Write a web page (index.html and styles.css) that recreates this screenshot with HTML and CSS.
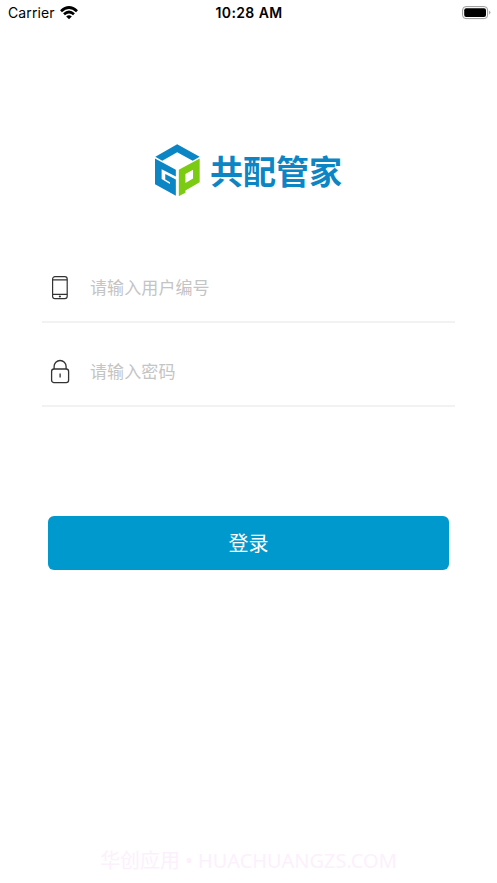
FILE: index.html
```html
<!DOCTYPE html>
<html lang="zh-CN">
<head>
<meta charset="utf-8">
<title>共配管家</title>
<link rel="stylesheet" href="styles.css">
</head>
<body>
<header class="status">
  <div class="carrier"><span>Carrier</span>
    <svg class="wifi" viewBox="0 0 18 14"><path d="M1 5.2Q9-2.2 17 5.2M4 8.2Q9 3.8 14 8.2" fill="none" stroke="#000" stroke-width="2.7"/><path d="M6.2 10.4Q9 8 11.8 10.4L9 13.2Z"/></svg>
  </div>
  <time class="clock">10:28 AM</time>
  <svg class="battery" viewBox="0 0 29 14"><rect x=".6" y=".6" width="25" height="12" rx="3.4" fill="#fff" stroke="#999"/><rect x="2.2" y="2.2" width="21.8" height="8.8" rx="2"/><path d="M27.2 4.6Q29.6 6.6 27.2 8.6Z" fill="#999"/></svg>
</header>
<main class="login">
  <div class="brand">
    <svg class="mark" viewBox="30 27 136 156">
      <path fill="#0c85c5" d="M97 27L165 65L144 77L97 51L52 77L31 65Z"/>
      <path fill="#0c85c5" d="M30 70L93 104V125L50 103V132L75 147V142L61 134V117L93 134V183L30 148Z"/>
      <path fill="#7acb12" fill-rule="evenodd" d="M102 104L165 70V142L122 167V174L102 184ZM122 117V144L145 131V104Z"/>
    </svg>
    <h1 class="name">共配管家</h1>
  </div>
  <form class="form">
    <label class="field">
      <svg class="icon" viewBox="0 0 20 26" fill="none" stroke="#333" stroke-width="1.2"><rect x="2.6" y="1.6" width="14.6" height="22" rx="2.4"/><path d="M2.6 4.8H17.2M2.6 19.4H17.2"/><circle cx="9.9" cy="21.5" r=".5"/></svg>
      <input class="input" type="text" placeholder="请输入用户编号">
    </label>
    <label class="field">
      <svg class="icon" viewBox="0 0 20 26" fill="none" stroke="#333" stroke-width="1.3"><rect x="1.6" y="10" width="17" height="13.6" rx="2.4"/><path d="M4.1 10V7.5A6 6 0 0 1 16.1 7.5V10M10.1 14.5V18.5"/></svg>
      <input class="input" type="password" placeholder="请输入密码">
    </label>
    <button class="submit" type="button">登录</button>
  </form>
</main>
<footer class="footer">华创应用 • HUACHUANGZS.COM</footer>
</body>
</html>
```
FILE: styles.css
```css
* { box-sizing: border-box; }
body {
  margin: 0;
  height: 883px;
  display: flex;
  flex-direction: column;
  overflow: hidden;
  background: #fff;
  color: #000;
  font-family: Inter, "Noto Sans CJK SC", sans-serif;
}
.status {
  height: 26px;
  padding: 0 6px 0 8px;
  display: grid;
  grid-template-columns: 1fr auto 1fr;
  align-items: center;
  font-size: 14px;
  line-height: 16px;
}
.carrier { display: flex; align-items: center; gap: 5px; letter-spacing: .1px; }
.wifi { width: 18px; height: 14px; }
.clock { font-weight: 600; letter-spacing: .4px; margin-left: -1px; }
.battery { width: 29px; height: 14px; justify-self: end; }
.login { flex: 1; }
.brand {
  margin-top: 118px;
  height: 52px;
  padding-left: 155px;
  display: flex;
  align-items: center;
  gap: 10px;
}
.mark { width: 45px; height: 52px; }
.name {
  margin: 0;
  font: 700 33px/52px "Noto Sans CJK SC", sans-serif;
  color: #0c85c5;
  white-space: nowrap;
}
.form { margin: 43px 42px 0; }
.field {
  height: 84px;
  padding: 14px 0 0 8px;
  display: flex;
  align-items: center;
  gap: 20px;
  border-bottom: 2px solid #f2f2f2;
}
.icon { width: 20px; height: 26px; flex: none; margin-top: 2px; }
.input {
  flex: 1;
  min-width: 0;
  height: 30px;
  padding: 0;
  border: 0;
  outline: 0;
  background: none;
  font: 400 17px/30px "Noto Sans CJK SC", sans-serif;
  letter-spacing: .1px;
}
.input::placeholder { color: #c4c4c4; opacity: 1; }
.submit {
  display: block;
  width: 401px;
  height: 54px;
  margin: 109px 0 0 6px;
  padding: 0;
  border: 0;
  border-radius: 6px;
  background: #0099ce;
  color: #fff;
  font: 400 20px/54px "Noto Sans CJK SC", sans-serif;
}
.footer {
  height: 44px;
  text-align: center;
  color: #fdf0fd;
  font: 400 20px/44px "Noto Sans", "Noto Sans CJK SC", sans-serif;
}
```
